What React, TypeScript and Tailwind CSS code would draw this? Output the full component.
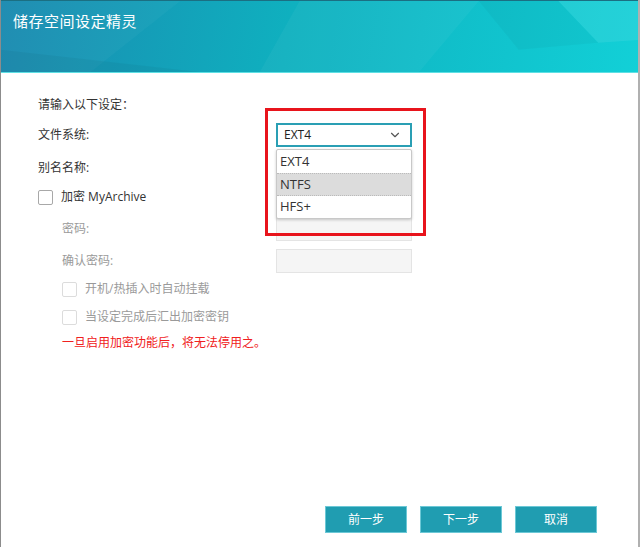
import { ChevronDown } from 'lucide-react';

const font = { fontFamily: '"Open Sans", "Noto Sans CJK SC", sans-serif' };

const Box = ({ disabled }: { disabled?: boolean }) => (
  <span
    className={`inline-block w-[15px] h-[15px] rounded-[2px] border bg-white ${disabled ? 'border-[#dcdcdc]' : 'border-[#a8a8a8]'}`}
  />
);

const App = () => {
  return (
    <div className="relative w-[640px] h-[547px] bg-white flex flex-col overflow-hidden border-l border-[#8c8c8c] border-r-2 border-r-[#b0b0b0]" style={font}>
      {/* Header */}
      <div className="relative h-[73px] shrink-0 bg-[linear-gradient(100deg,#1a8ab0_0%,#0fb0bf_45%,#12d0d7_100%)] border-t border-[#1b6f82] border-b border-b-[#5fe0e4]">
        <svg className="absolute inset-0 w-full h-full" viewBox="0 0 640 73" preserveAspectRatio="none">
          <polygon points="0,0 180,0 90,73 0,73" fill="#ffffff" opacity="0.03" />
          <polygon points="300,0 480,0 420,73 260,73" fill="#ffffff" opacity="0.04" />
          <polygon points="560,0 640,0 640,40 600,43" fill="#ffffff" opacity="0.08" />
          <polygon points="480,0 560,0 600,43 520,50" fill="#000000" opacity="0.03" />
          <polygon points="0,50 200,73 0,73" fill="#000000" opacity="0.04" />
        </svg>
        <h1 className="relative pl-[12px] pt-[9px] text-[15px] text-white tracking-[0.5px]">储存空间设定精灵</h1>
      </div>

      {/* Body */}
      <div className="flex-1 pt-[20px] pl-[37px] text-[12px] text-[#333]">
        <div className="h-6 flex items-center">请输入以下设定：</div>

        <div className="h-6 mt-[6px] flex items-center">
          <span className="w-[238px]">文件系统:</span>
          <div className="relative">
            <div className="w-[136px] h-[24px] border-2 border-[#2a9fb4] flex items-center justify-between pl-[6px] pr-[8px] text-[12px] text-[#222]">
              <span>EXT4</span>
              <ChevronDown size={14} strokeWidth={2} className="text-[#555]" />
            </div>
            <div className="absolute left-0 top-[26px] z-10 w-[136px] bg-white border border-[#c8c8c8] rounded-[2px] shadow-[0_1px_3px_rgba(0,0,0,0.2)] text-[13px] text-[#333]">
              <div className="h-[23px] flex items-center pl-[3px]">EXT4</div>
              <div className="h-[23px] flex items-center pl-[3px] bg-[#dcdcdc] border-y border-dotted border-[#bbb]">NTFS</div>
              <div className="h-[22px] flex items-center pl-[3px]">HFS+</div>
            </div>
          </div>
        </div>

        <div className="h-6 mt-[9px] flex items-center">
          <span className="w-[238px]">别名名称:</span>
          <div className="w-[136px] h-[24px] border border-[#d8d8d8]" />
        </div>

        <div className="h-6 mt-[5px] flex items-center gap-[8px]">
          <Box />
          <span className="text-[12px]">加密 MyArchive</span>
        </div>

        <div className="pl-[24px] text-[#9a9a9a]">
          <div className="h-6 mt-[8px] flex items-center">
            <span className="w-[214px]">密码:</span>
            <div className="w-[136px] h-[24px] border border-[#e4e4e4] bg-[#f5f5f5]" />
          </div>
          <div className="h-6 mt-[8px] flex items-center">
            <span className="w-[214px]">确认密码:</span>
            <div className="w-[136px] h-[24px] border border-[#e4e4e4] bg-[#f5f5f5]" />
          </div>
          <div className="h-6 mt-[4px] flex items-center gap-[8px]">
            <Box disabled />
            <span>开机/热插入时自动挂载</span>
          </div>
          <div className="h-6 mt-[4px] flex items-center gap-[8px]">
            <Box disabled />
            <span>当设定完成后汇出加密密钥</span>
          </div>
          <div className="h-6 mt-[2px] flex items-center text-[#f02020]">一旦启用加密功能后，将无法停用之。</div>
        </div>
      </div>

      {/* Footer */}
      <div className="flex justify-end gap-[13px] pr-[41px] pb-[14px]">
        <button className="w-[82px] h-[27px] bg-[#209db1] text-white text-[12px] border border-[#6cc8d6]">前一步</button>
        <button className="w-[82px] h-[27px] bg-[#209db1] text-white text-[12px] border border-[#6cc8d6]">下一步</button>
        <button className="w-[82px] h-[27px] bg-[#209db1] text-white text-[12px] border border-[#6cc8d6]">取消</button>
      </div>

      {/* Annotation frame */}
      <div className="absolute left-[264px] top-[108px] w-[161px] h-[128px] border-[3px] border-[#e8141c] pointer-events-none" />
    </div>
  );
};

export default App;
